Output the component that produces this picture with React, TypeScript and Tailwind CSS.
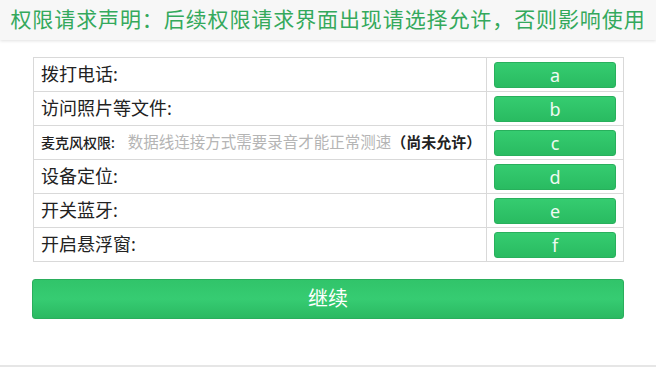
const permissions = [
  { label: '拨打电话:', key: 'a' },
  { label: '访问照片等文件:', key: 'b' },
  { label: '麦克风权限:', key: 'c', desc: '数据线连接方式需要录音才能正常测速', status: '（尚未允许）' },
  { label: '设备定位:', key: 'd' },
  { label: '开关蓝牙:', key: 'e' },
  { label: '开启悬浮窗:', key: 'f' },
];

function GreenButton({ text }: { text: string }) {
  return (
    <button className="w-full h-[26px] rounded-[3px] border border-[#28b05c] bg-gradient-to-b from-[#35cc70] to-[#29bb61] text-[18px] leading-none text-[#eefaf2] flex items-center justify-center">
      {text}
    </button>
  );
}

export default function App() {
  return (
    <div
      className="w-[656px] h-[367px] bg-white flex flex-col relative"
      style={{ fontFamily: '"Noto Sans", "Noto Sans CJK SC", sans-serif' }}
    >
      {/* Header notice */}
      <div className="h-[40px] bg-[#f7f7f7] shadow-[0_1px_3px_rgba(0,0,0,0.12)] flex items-center justify-center">
        <span className="text-[21px] tracking-[0.9px] text-[#34a95c] whitespace-nowrap">
          权限请求声明：后续权限请求界面出现请选择允许，否则影响使用
        </span>
      </div>

      <div className="pl-[33px] pr-[32px] pt-[17px] flex flex-col">
        {/* Permission table */}
        <div className="border border-[#d9d9d9] border-b-0">
          {permissions.map((p) => (
            <div key={p.key} className="h-[34px] flex border-b border-[#d9d9d9]">
              <div className="w-[453px] border-r border-[#d9d9d9] pl-[7px] flex items-center whitespace-nowrap text-[#222]">
                {p.desc ? (
                  <span className="flex items-center">
                    <span className="text-[14px] font-medium">{p.label}</span>
                    <span className="ml-[13px] text-[15.5px] text-[#b5b5b5]">{p.desc}</span>
                    <span className="text-[15px] font-semibold">{p.status}</span>
                  </span>
                ) : (
                  <span className="text-[18px]">{p.label}</span>
                )}
              </div>
              <div className="flex-1 px-[7px] flex items-center">
                <GreenButton text={p.key} />
              </div>
            </div>
          ))}
        </div>

        {/* Continue */}
        <button className="mt-[17px] -ml-[1px] h-[40px] rounded-[3px] border border-[#2aae5c] bg-gradient-to-b from-[#31c46a] via-[#36cc72] to-[#2bb962] text-white text-[20px] flex items-center justify-center">
          继续
        </button>
      </div>

      <div className="absolute left-0 right-0 bottom-0 h-[2px] bg-[#e6e6e6]" />
    </div>
  );
}
